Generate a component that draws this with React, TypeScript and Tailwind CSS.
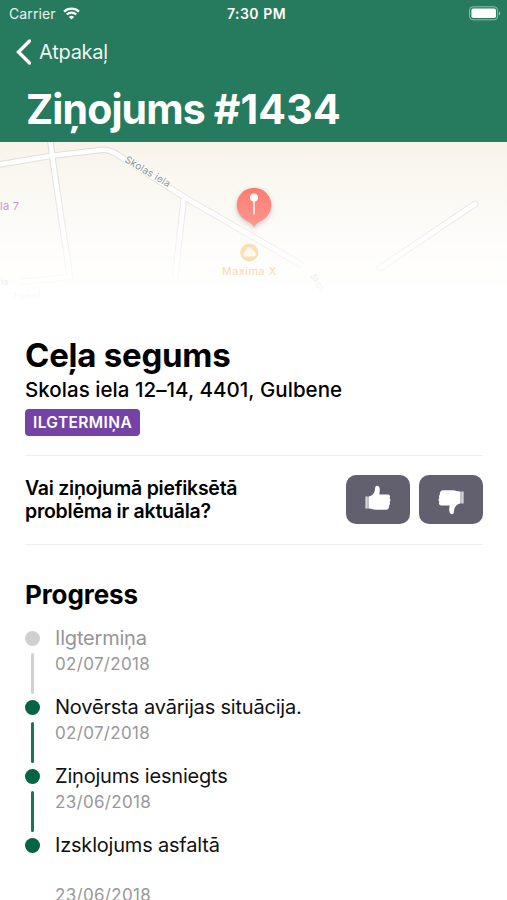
import React from 'react';

type Step = { title: string; date: string; done: boolean; gap?: boolean };

const steps: Step[] = [
  { title: 'Ilgtermiņa', date: '02/07/2018', done: false },
  { title: 'Novērsta avārijas situācija.', date: '02/07/2018', done: true },
  { title: 'Ziņojums iesniegts', date: '23/06/2018', done: true },
  { title: 'Izsklojums asfaltā', date: '23/06/2018', done: true, gap: true },
];

function StatusBar() {
  return (
    <div className="grid h-[27px] grid-cols-3 items-center pl-[9px] pr-[6px] text-[14px]">
      <div className="flex items-center gap-[7px]">
        <span className="tracking-[0.1px] text-white/90">Carrier</span>
        <svg width="17" height="13" viewBox="0 0 17 13" fill="none" stroke="#fff" strokeWidth="2.2">
          <path d="M1 4.6C5.2.6 11.8.6 16 4.6" />
          <path d="M3.7 7.5c2.7-2.5 6.9-2.5 9.6 0" />
          <path d="M8.5 12.6 5.9 9.900c1.500-1.400 3.700-1.400 5.200 0Z" fill="#fff" stroke="none" />
        </svg>
      </div>
      <span className="pl-[3px] text-center text-[14px] font-semibold tracking-[0.5px] whitespace-nowrap">7:30 PM</span>
      <svg className="justify-self-end" width="32" height="15" viewBox="0 0 32 15">
        <rect x=".6" y=".8" width="28" height="13" rx="3.4" fill="none" stroke="#fff" strokeOpacity=".5" />
        <rect x="2.4" y="2.6" width="24.6" height="9.4" rx="1.8" fill="#fff" />
        <path d="M30 5.4c1.6.6 1.6 3.2 0 3.8Z" fill="#fff" fillOpacity=".6" />
      </svg>
    </div>
  );
}

function Header() {
  return (
    <header className="h-[142px] shrink-0 bg-[#267a5d] text-white">
      <StatusBar />
      <div className="flex h-[50px] items-center gap-[8px] pl-[16px]">
        <svg width="15" height="26" viewBox="0 0 15 26" fill="none" stroke="#fff" strokeWidth="3.4" strokeLinecap="round" strokeLinejoin="miter">
          <path d="M13.500 2 2.500 13 13.500 24" />
        </svg>
        <span className="text-[20px] tracking-[-0.250px] text-white/95">Atpakaļ</span>
      </div>
      <h1 className="pl-[26px] pt-[7px] text-[41px] leading-[50px] font-bold tracking-[-0.9px]">
        Ziņojums <span className="tracking-[0.2px]">#1434</span>
      </h1>
    </header>
  );
}

function MapView() {
  const roads = [
    'M-4 165 L50 156 L101 150 Q108 149 115 153 L184 197 L302 265',
    'M50 138 L53 162 L70 277 L20 282',
    'M184 197 L175 278',
    'M475 204 L380 268',
  ];
  return (
    <svg className="block h-[160px] w-full shrink-0" viewBox="0 142 507 160">
      <defs>
        <linearGradient id="land" x1="0" y1="0" x2="0" y2="1">
          <stop offset="0" stopColor="#f8f4ea" />
          <stop offset="1" stopColor="#fdfcf9" />
        </linearGradient>
        <linearGradient id="fade" x1="0" y1="0" x2="0" y2="1">
          <stop offset="0" stopColor="#fff" stopOpacity="0" />
          <stop offset=".45" stopColor="#fff" stopOpacity=".35" />
          <stop offset=".8" stopColor="#fff" stopOpacity=".78" />
          <stop offset="1" stopColor="#fff" />
        </linearGradient>
        <linearGradient id="pin" x1="0" y1="0" x2="0" y2="1">
          <stop offset="0" stopColor="#fb7b70" />
          <stop offset="1" stopColor="#fd9990" />
        </linearGradient>
        <filter id="shadow" x="-50%" y="-50%" width="200%" height="200%">
          <feDropShadow dx="0" dy="2" stdDeviation="2.5" floodColor="#555" floodOpacity=".3" />
        </filter>
      </defs>
      <rect y="142" width="507" height="160" fill="url(#land)" />
      <g fill="none" stroke="#dfdcd6" strokeWidth="6.6" strokeLinejoin="round">
        {roads.map((d) => <path key={d} d={d} strokeLinecap={d.startsWith('M475') ? 'round' : 'butt'} />)}
      </g>
      <g fill="none" stroke="#fff" strokeWidth="4.6" strokeLinejoin="round">
        {roads.map((d) => <path key={d} d={d} strokeLinecap={d.startsWith('M475') ? 'round' : 'butt'} />)}
      </g>
      <g fontFamily="Inter, sans-serif">
        <text transform="translate(124 161.500) rotate(30.500)" fontSize="10" letterSpacing=".1" fill="#7c7b77" stroke="#fff" strokeWidth="2" paintOrder="stroke">Skolas iela</text>
        <text transform="translate(310 276) rotate(58)" fontSize="8.500" fill="#8d8c88">Skol</text>
        <text x="0" y="209.500" fontSize="11" letterSpacing=".3" fill="#b366c4">la 7</text>
        <text x="1" y="285" fontSize="9" fill="#77756f">ia</text>
        <text x="14" y="300" fontSize="10.500" fontWeight="700" fill="#77756f">Lvosi</text>
      </g>
      <rect y="142" width="507" height="160" fill="url(#fade)" />
      <g filter="url(#shadow)">
        <path d="M254 227.500c-2-4.500-5.500-5.500-9.500-8A17.300 17.300 0 1 1 263.500 219.500c-4 2.500-7.500 3.500-9.500 8Z" fill="url(#pin)" />
      </g>
      <circle cx="254" cy="197.500" r="4" fill="#fff" />
      <path d="M254 199v14.500" stroke="#fff" strokeOpacity=".8" strokeWidth="1.8" strokeLinecap="round" />
      <circle cx="249.300" cy="252.500" r="9" fill="#fbdfb2" />
      <path d="M244 256.500q-1.500-3 1-5.500l3-3.500q2-1 3.500 1l3.500 3.500q1.500 2 0 4.500Z" fill="#fffaf0" />
      <text x="222" y="274.500" fontFamily="Inter, sans-serif" fontSize="10.500" letterSpacing=".75" fill="#f9d9a8">Maxima X</text>
    </svg>
  );
}

function Thumb({ down = false }: { down?: boolean }) {
  return (
    <button className="flex h-[49px] w-[64px] items-center justify-center rounded-[10px] bg-[#62606f]" aria-label={down ? 'Nē' : 'Jā'}>
      <svg className={down ? 'mt-[4px] rotate-180' : 'mb-[4px]'} width="26" height="26" viewBox="0 0 26 26" fill="#fff">
        <path d="M.5 11.500h1.300v12H.5z" fillOpacity=".9" />
        <path d="M1.800 11.500h2.200v12H1.800z" fillOpacity=".6" />
        <path d="M4 11.500c3-.3 5-3 5.700-5.500.4-1.700.1-5.200 2.300-5.200 3.300 0 3.200 5.200 2.300 8.700h8.400c2.300 0 3 2.200 1.900 3.700 1.200 1.100 1 2.900 0 3.700.8 1.200.6 2.600-.5 3.400.5 2.100-.8 4.200-2.700 4.500H10.600c-2.300 0-3.500-1.300-6.600-1.300Z" />
      </svg>
    </button>
  );
}

function ProgressStep({ step, last }: { step: Step; last: boolean }) {
  const dot = step.done ? 'bg-[#066443]' : 'bg-[#d0d0d2]';
  const line = step.done ? 'bg-[#1b7454]' : 'bg-[#d2d2d4]';
  return (
    <li className="flex h-[69px] gap-[15px]">
      <div className="flex w-[15px] flex-col items-center pt-[6px]">
        <span className={`size-[15px] shrink-0 rounded-full ${dot}`} />
        {!last && <span className={`mt-[7px] h-[41px] w-[3px] rounded-full ${line}`} />}
      </div>
      <div className="whitespace-nowrap">
        <p className={`text-[20px] leading-[27px] tracking-[-0.2px] ${step.done ? 'text-[#111]' : 'text-[#959597]'}`}>{step.title}</p>
        <p className={`text-[17px] leading-[25px] tracking-[0.320px] text-[#98989a] ${step.gap ? 'mt-[24px]' : ''}`}>{step.date}</p>
      </div>
    </li>
  );
}

export default function App() {
  return (
    <div className="flex h-[900px] w-[507px] flex-col overflow-hidden bg-white font-['Inter',sans-serif] text-black">
      <Header />
      <MapView />
      <main className="flex flex-col pl-[25px] pr-[24px] pt-[32px]">
        <h2 className="text-[33px] leading-[42px] font-bold tracking-[-0.250px]">Ceļa segums</h2>
        <p className="text-[20.500px] leading-[28px] font-medium tracking-[0.050px] whitespace-nowrap">Skolas iela 12–14, 4401, Gulbene</p>
        <span className="mt-[5px] flex h-[27px] w-[115px] items-center justify-center rounded-[4px] bg-[#7443a5] text-[15.500px] font-semibold tracking-[0.4px] text-white">ILGTERMIŅA</span>
        <section className="mt-[19px] flex h-[90px] items-center justify-between border-y border-[#efefef]">
          <p className="text-[19.500px] leading-[23px] font-semibold tracking-[-0.250px] whitespace-nowrap">Vai ziņojumā piefiksētā<br />problēma ir aktuāla?</p>
          <div className="-mt-[1px] flex gap-[9px]">
            <Thumb />
            <Thumb down />
          </div>
        </section>
        <h3 className="mt-[32px] text-[26px] leading-[36px] font-bold tracking-[-0.1px]">Progress</h3>
        <ul className="mt-[12px]">
          {steps.map((s, i) => <ProgressStep key={s.title} step={s} last={i === steps.length - 1} />)}
        </ul>
      </main>
    </div>
  );
}
